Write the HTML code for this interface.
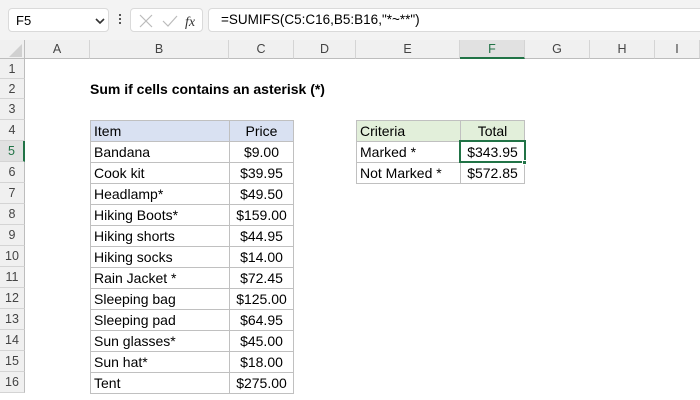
<!DOCTYPE html>
<html><head><meta charset="utf-8"><style>
*{box-sizing:border-box;margin:0;padding:0}
body{width:700px;height:400px;overflow:hidden;background:#fff;font-family:"Liberation Sans",sans-serif;position:relative}
.a{position:absolute}
.fb{background:#f3f3f3;left:0;top:0;width:700px;height:40px}
.box{position:absolute;background:#fff;border:1px solid #dadada;border-radius:4px;top:8px;height:24px}
.ch{position:absolute;top:40px;height:19px;background:#f0f0f0;border-right:1px solid #d4d4d4;border-bottom:1px solid #bdbdbd;color:#444;font-size:12.5px;text-align:center;line-height:19px}
.rh{position:absolute;left:0;width:25px;background:#f0f0f0;border-bottom:1px solid #d4d4d4;border-right:1px solid #bdbdbd;color:#444;font-size:12.5px;text-align:center}
.c{position:absolute;font-size:14px;color:#000;border:1px solid #c0c0c0;padding-left:3px;white-space:nowrap}
.r{text-align:center;padding-left:0}
</style></head><body>
<div class="a fb"></div>
<div class="box" style="left:8px;width:101px"><span class="a" style="left:7px;top:4px;font-size:13px">F5</span><svg class="a" style="left:86px;top:8px" width="10" height="8"><path d="M1 2 L5 6 L9 2" stroke="#333" stroke-width="1.6" fill="none"/></svg></div>
<div class="a" style="left:119px;top:14px;width:2px;height:2px;background:#555;box-shadow:0 4px #555,0 8px #555"></div>
<div class="box" style="left:130px;width:73px"><svg class="a" style="left:6px;top:4px" width="66" height="16"><path d="M3 2 L15 14 M15 2 L3 14" stroke="#bbb" stroke-width="1.2"/><path d="M26 8 L31 13 L40 3" stroke="#bbb" stroke-width="1.2" fill="none"/><text x="48" y="13" font-family="Liberation Serif" font-style="italic" font-size="14" fill="#333">fx</text></svg></div>
<div class="box" style="left:208px;width:500px;border-radius:4px 0 0 4px"><span class="a" style="left:12px;top:3px;font-size:13.5px">=SUMIFS(C5:C16,B5:B16,"*~**")</span></div>
<div class="a" style="left:0;top:40px;width:25px;height:19px;background:#f0f0f0;border-right:1px solid #bdbdbd;border-bottom:1px solid #bdbdbd"><svg class="a" style="left:9px;top:4px" width="13" height="13"><path d="M13 0 L13 13 L0 13Z" fill="#d0d0d0"/></svg></div>
<div class="ch" style="left:25px;width:65px">A</div>
<div class="ch" style="left:90px;width:139px">B</div>
<div class="ch" style="left:229px;width:65px">C</div>
<div class="ch" style="left:294px;width:62px">D</div>
<div class="ch" style="left:356px;width:104px">E</div>
<div class="ch" style="left:460px;width:65px;background:#e1e1e1;border-bottom:2px solid #217346;color:#217346">F</div>
<div class="ch" style="left:525px;width:65px">G</div>
<div class="ch" style="left:590px;width:65px">H</div>
<div class="ch" style="left:655px;width:45px">I</div>
<div id="rows"></div>
<div class="a" style="left:90px;top:81px;font-size:14px;font-weight:bold">Sum if cells contains an asterisk (*)</div>
<script>
var h='';var tops=[59,79,99,120];for(var i=5;i<=17;i++)tops.push(120+(i-4)*21);
for(var n=1;n<=16;n++){var t=tops[n-1],ht=tops[n]-t;var sel=n==5;
h+='<div class="rh" style="top:'+t+'px;height:'+ht+'px;line-height:'+ht+'px;'+(sel?'background:#e1e1e1;color:#217346;border-right:2px solid #217346':'')+'">'+n+'</div>';}
var items=[["Item","Price"],["Bandana","$9.00"],["Cook kit","$39.95"],["Headlamp*","$49.50"],["Hiking Boots*","$159.00"],["Hiking shorts","$44.95"],["Hiking socks","$14.00"],["Rain Jacket *","$72.45"],["Sleeping bag","$125.00"],["Sleeping pad","$64.95"],["Sun glasses*","$45.00"],["Sun hat*","$18.00"],["Tent","$275.00"]];
for(var k=0;k<items.length;k++){var t=tops[3+k];var bg=k==0?'background:#d9e1f2;':'';
h+='<div class="c" style="'+bg+'left:90px;top:'+t+'px;width:140px;height:22px;line-height:20px">'+items[k][0]+'</div>';
h+='<div class="c r" style="'+bg+'left:229px;top:'+t+'px;width:65px;height:22px;line-height:20px">'+items[k][1]+'</div>';}
var cr=[["Criteria","Total"],["Marked *","$343.95"],["Not Marked *","$572.85"]];
for(var k=0;k<3;k++){var t=tops[3+k];var bg=k==0?'background:#e2efda;':'';
h+='<div class="c" style="'+bg+'left:356px;top:'+t+'px;width:105px;height:22px;line-height:20px">'+cr[k][0]+'</div>';
h+='<div class="c r" style="'+bg+'left:460px;top:'+t+'px;width:65px;height:22px;line-height:20px">'+cr[k][1]+'</div>';}
h+='<div class="a" style="left:459px;top:140px;width:67px;height:23px;border:2px solid #217346"></div><div class="a" style="left:522px;top:160px;width:5px;height:5px;background:#217346;border:1px solid #fff"></div>';
document.getElementById('rows').innerHTML=h;
</script>
</body></html>
